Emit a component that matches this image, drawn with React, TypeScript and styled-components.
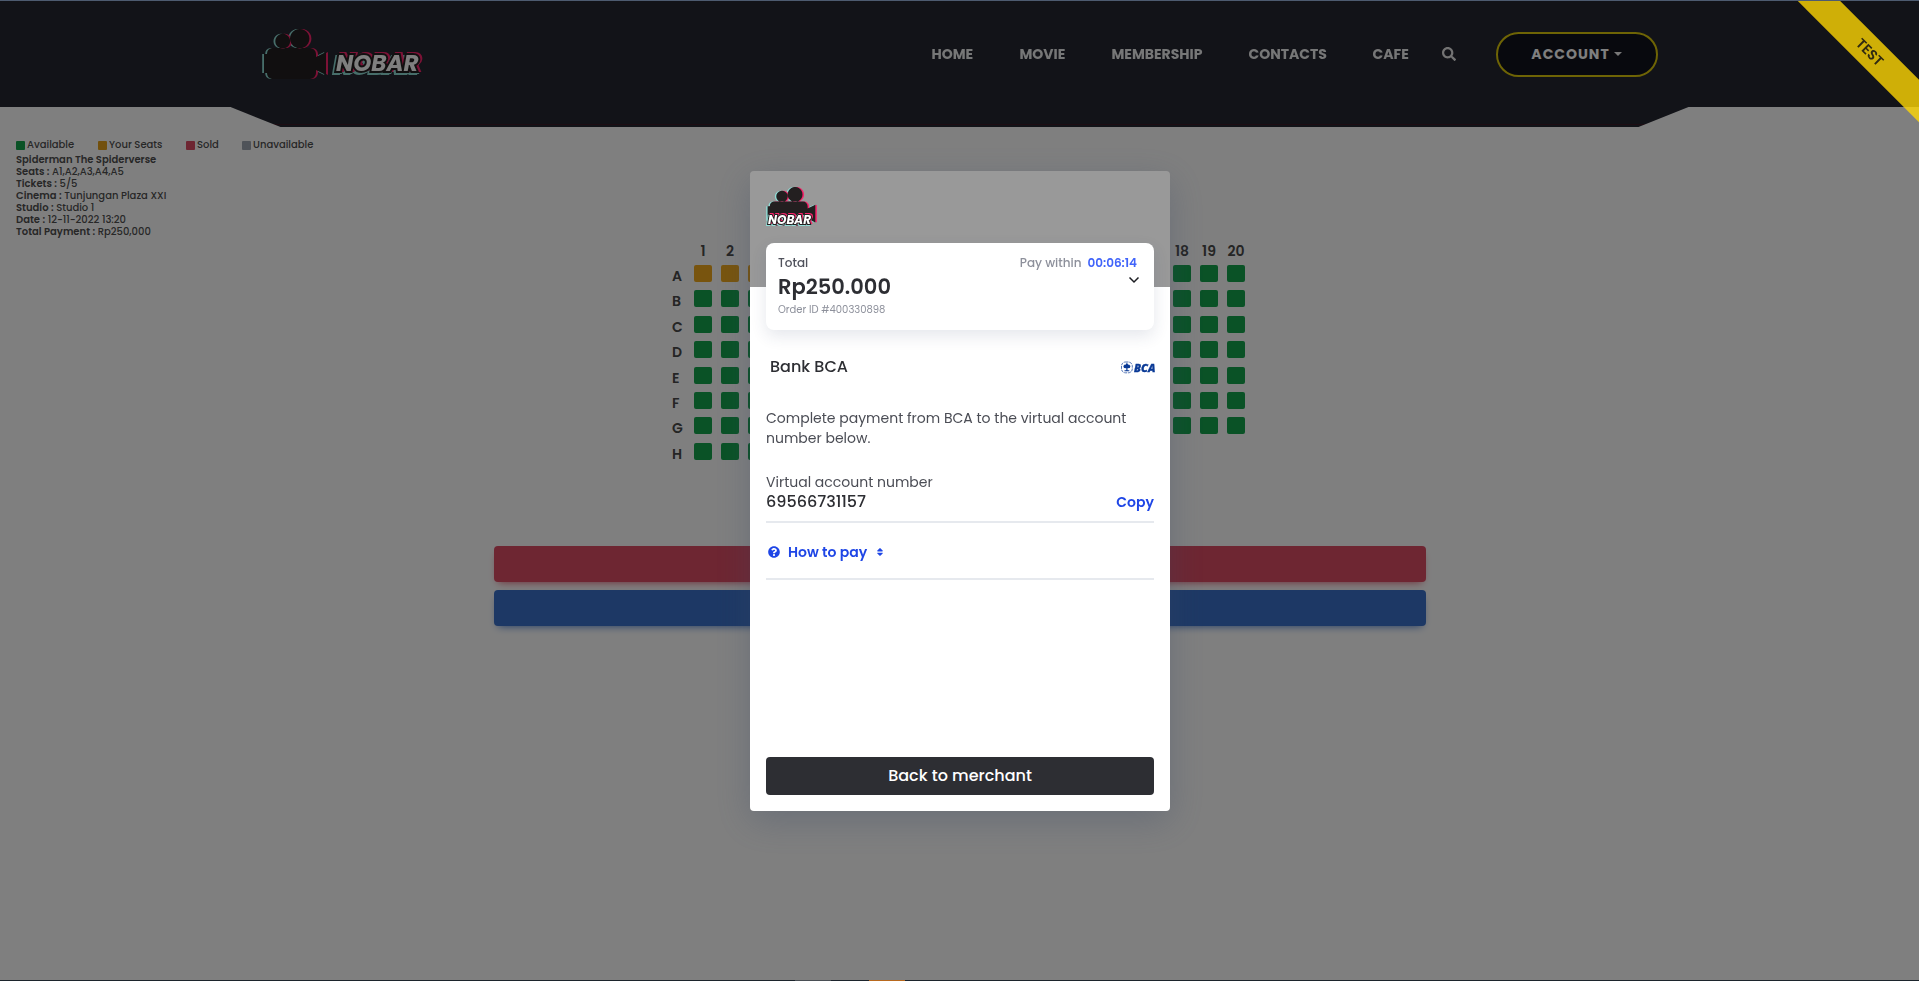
import React from 'react';
import styled, { createGlobalStyle } from 'styled-components';
import { FaSearch, FaQuestionCircle, FaSort } from 'react-icons/fa';

const GlobalStyle = createGlobalStyle`
  *, *::before, *::after { box-sizing: border-box; }
  body {
    margin: 0;
    background: #fff;
    color: #4f4f4f;
    font-family: Poppins, Inter, "Open Sans", sans-serif;
    font-size: 14px;
  }
  button { font-family: inherit; cursor: pointer; }
  p, h1, h2 { margin: 0; }
`;

/* ---------- page behind the dialog ---------- */

const Page = styled.div`
  min-height: 100vh;
  overflow: hidden;
`;

const HeaderBar = styled.header`
  height: 107px;
  padding: 0 24px;
  background: #242630;
`;

const HeaderInner = styled.div`
  display: flex;
  align-items: center;
  max-width: 1396px;
  height: 108px;
  margin: 0 auto;
`;

const HeaderTray = styled.div`
  max-width: 1458px;
  height: 20px;
  margin: 0 auto;
  background: linear-gradient(#242630 17px, #3c1a26 17px, #3c1a26 18px, #242630 18px);
  clip-path: polygon(0 0, 100% 0, calc(100% - 50px) 100%, 50px 100%);
`;

const LogoLink = styled.a`
  display: flex;
  margin-right: auto;
`;

const Nav = styled.nav`
  display: flex;
  align-items: center;
  height: 44px;
`;

const NavLink = styled.a<{ $width: number }>`
  width: ${(p) => p.$width}px;
  color: #fff;
  opacity: 0.92;
  font-size: 14px;
  line-height: 20px;
  font-weight: 700;
  text-decoration: none;
  white-space: nowrap;
`;

const IconButton = styled.button`
  display: flex;
  margin: 0 40px 0 0;
  padding: 0;
  border: 0;
  background: none;
  color: #e6e6e6;
`;

const AccountButton = styled.button`
  display: flex;
  align-items: center;
  justify-content: center;
  gap: 4px;
  width: 162px;
  height: 45px;
  border: 2px solid #dcc80a;
  border-radius: 23px;
  background: #10121c;
  color: #fff;
  font-size: 14px;
  font-weight: 700;
  letter-spacing: 1px;
`;

const Caret = styled.span`
  border: 4px solid transparent;
  border-top-color: #f0f0f0;
  border-bottom: 0;
`;

const Booking = styled.section`
  display: grid;
  justify-items: start;
  padding: 12px 16px 0;
  font-size: 10px;
  line-height: 12px;
`;

const Legend = styled.ul`
  display: grid;
  grid-template-columns: 82px 88px 56px auto;
  justify-content: start;
  margin: 0 0 3px;
  padding: 0;
  list-style: none;
  font-weight: 500;
`;

const LegendItem = styled.li<{ $color: string }>`
  display: flex;
  align-items: center;
  gap: 2px;
  white-space: nowrap;

  &::before {
    content: '';
    width: 9px;
    height: 9px;
    border-radius: 1px;
    background: ${(p) => p.$color};
  }
`;

const Detail = styled.p`
  font-weight: 500;
  b { font-weight: 600; }
`;

const SeatMap = styled.section`
  display: grid;
  justify-content: center;
  margin-top: 2px;
  padding-right: 2px;
`;

const SeatRow = styled.div`
  display: grid;
  grid-template-columns: 13px repeat(10, 18px) 11px repeat(10, 18px);
  column-gap: 9px;
  align-items: start;
`;

const SeatRows = styled.div`
  display: grid;
  grid-template-rows: repeat(8, 1fr);
  height: 203px;
`;

const SeatLabel = styled.span<{ $center?: boolean }>`
  display: flex;
  justify-content: ${(p) => (p.$center ? 'center' : 'flex-start')};
  font-size: 14px;
  line-height: 22px;
  font-weight: 600;
  color: #4a4a4a;
`;

const NumberRow = styled(SeatRow)`
  height: 25px;
`;

const Seat = styled.input<{ $mine: boolean }>`
  appearance: none;
  width: 18px;
  height: 17px;
  margin: 0;
  border-radius: 2px;
  background: ${(p) => (p.$mine ? '#f0a91d' : '#14a44d')};
`;

const Actions = styled.div`
  display: grid;
  gap: 8px;
  max-width: 932px;
  margin: 78px auto 0;
`;

const ActionButton = styled.button<{ $color: string }>`
  height: 36px;
  border: 0;
  border-radius: 4px;
  background: ${(p) => p.$color};
  box-shadow: 0 4px 9px -4px ${(p) => p.$color};
`;

/* ---------- payment dialog ---------- */

const Overlay = styled.div`
  position: fixed;
  inset: 0;
  display: flex;
  align-items: center;
  justify-content: center;
  padding: 1px 0 0 1px;
  background: rgba(0, 0, 0, 0.5);
`;

const Dialog = styled.div`
  display: flex;
  flex-direction: column;
  width: 420px;
  min-height: 640px;
  padding: 16px;
  border-radius: 4px;
  background: linear-gradient(#999 116px, #fff 116px);
  box-shadow: 0 10px 35px rgba(60, 74, 104, 0.32);
  color: #2d2e33;
`;

const DialogBrand = styled.div`
  display: flex;
  height: 56px;
`;

const Summary = styled.section`
  display: grid;
  grid-template-columns: 1fr auto;
  height: 87px;
  padding: 10px 12px 0 12px;
  border-radius: 8px;
  background: #fff;
  box-shadow: 0 6px 16px rgba(40, 56, 100, 0.12);
  font-size: 12px;
  line-height: 20px;
  font-weight: 500;
  color: #50525c;
`;

const Timer = styled.p`
  display: flex;
  gap: 6px;
  padding-right: 5px;
  color: #8d909b;
  time { color: #4164fa; font-weight: 600; }
`;

const SummaryMain = styled.div`
  white-space: nowrap;
`;

const SummarySide = styled.div`
  display: flex;
  flex-direction: column;
  align-items: flex-end;
`;

const Amount = styled.h1`
  font-size: 21px;
  line-height: 28px;
  font-weight: 600;
  color: #2d2e33;
`;

const OrderId = styled.p`
  font-size: 10px;
  line-height: 18px;
  font-weight: 400;
  color: #8d909b;
`;

const ExpandButton = styled.button`
  display: flex;
  margin: 3px 2px 0 0;
  padding: 0;
  border: 0;
  background: none;
`;

const Method = styled.div`
  display: flex;
  align-items: center;
  justify-content: space-between;
  height: 74px;
  padding-left: 4px;
`;

const MethodName = styled.h2`
  font-size: 16px;
  line-height: 20px;
  font-weight: 500;
`;

const Instructions = styled.p`
  margin: 4px 0 24px;
  font-size: 14px;
  line-height: 20px;
  color: #4b4d55;
`;

const Account = styled.div`
  display: grid;
  grid-template-columns: 1fr auto;
  padding-bottom: 9px;
  border-bottom: 2px solid #e6e9ee;
  line-height: 20px;
`;

const AccountLabel = styled.span`
  grid-column: 1 / -1;
  color: #4b4d55;
`;

const AccountNumber = styled.output`
  font-size: 16px;
  font-weight: 500;
`;

const LinkButton = styled.button`
  display: flex;
  align-items: center;
  padding: 0;
  border: 0;
  background: none;
  color: #1f46e6;
  font-size: 14px;
  line-height: 20px;
  font-weight: 600;
`;

const HowTo = styled.div`
  display: flex;
  height: 57px;
  padding: 0 0 0 2px;
  border-bottom: 2px solid #e6e9ee;

  ${LinkButton} { height: 58px; gap: 8px; }
`;

const MerchantButton = styled.button`
  height: 38px;
  margin-top: auto;
  padding: 0 0 2px;
  border: 0;
  border-radius: 4px;
  background: #2d2e33;
  color: #fff;
  font-size: 16px;
  font-weight: 500;
`;

/* ---------- window decorations ---------- */

const RibbonCorner = styled.div`
  position: fixed;
  top: 0;
  right: 0;
  width: 140px;
  height: 140px;
  overflow: hidden;
  pointer-events: none;
`;

const Ribbon = styled.div`
  position: absolute;
  top: 37px;
  left: -9px;
  width: 200px;
  height: 30px;
  background: rgba(255, 215, 4, 0.8);
  color: #2f2a12;
  font-size: 14px;
  line-height: 30px;
  font-weight: 600;
  text-align: center;
  transform: rotate(45deg);
`;

const TopEdge = styled.div`
  position: fixed;
  inset: 0 0 auto;
  height: 1px;
  background: #4d5b70;
`;

const BottomEdge = styled.div`
  position: fixed;
  inset: auto 0 0;
  display: flex;
  justify-content: center;
  gap: 38px;
  height: 1px;
  padding-right: 219px;
  background: #1c242c;
`;

const EdgeTab = styled.span<{ $color: string }>`
  width: 36px;
  background: ${(p) => p.$color};
`;

/* ---------- drawings ---------- */

const CAMERA =
  'M22 33H60A6 6 0 0 1 66 39V42L76 37V60L66 55V58A6 6 0 0 1 60 64H22A6 6 0 0 1 17 58H14V39H17A6 6 0 0 1 22 33Z' +
  'M32.7 18.8a7.4 7.4 0 1 0 .01 0ZM49.7 14a9.7 9.7 0 1 0 .01 0Z';

const Camera = () => (
  <g>
    <path d={CAMERA} fill="#8fdcd5" transform="translate(-1.8 0)" />
    <path d={CAMERA} fill="#f8246c" transform="translate(2 0)" />
    <path d={CAMERA} fill="#231f20" />
  </g>
);

const Wordmark = styled.text<{ $size: number; $edge: number }>`
  font-family: Poppins, Lato, sans-serif;
  font-size: ${(p) => p.$size}px;
  font-weight: 700;
  font-style: italic;
  fill: #fff;
  stroke: #231f20;
  stroke-width: ${(p) => p.$edge * 2}px;
  paint-order: stroke;
  filter: drop-shadow(${(p) => p.$edge}px -1px 0 #f8246c)
    drop-shadow(-${(p) => p.$edge}px ${(p) => p.$edge}px 0 #8fdcd5);
`;

const HeaderLogo = () => (
  <svg width="162" height="54" viewBox="12 12 162 54" role="img" aria-label="Nobar">
    <Camera />
    <Wordmark x="86" y="56" $size={23} $edge={2}>NOBAR</Wordmark>
  </svg>
);

const DialogLogo = () => (
  <svg width="52" height="40" viewBox="0 0 52 40" role="img" aria-label="Nobar">
    <g transform="translate(-9.2 -10.8) scale(.77)"><Camera /></g>
    <Wordmark x="2" y="37" $size={12} $edge={1}>NOBAR</Wordmark>
  </svg>
);

const BcaSvg = styled.svg`
  margin-right: -2px;
`;

const BcaLogo = () => (
  <BcaSvg width="36" height="13" viewBox="0 0 36 13" role="img" aria-label="BCA">
    <rect x="1.500" y="1" width="10.800" height="10.800" rx="4" fill="#fff" stroke="#0a3a96" strokeWidth=".7" strokeDasharray="3 .8" />
    <path d="M6.900 1.800 8.200 3.800 9 3.500 10.500 4.900 9.800 7 7.500 7.300V9.200H9.300V10.200H4.500V9.200H6.300V7.300L4 7 3.300 4.900 4.800 3.500 5.600 3.800Z" fill="#0a3a96" />
    <text x="14" y="10.500" fill="#0a3a96" stroke="#0a3a96" strokeWidth=".3" fontFamily="Open Sans, sans-serif" fontWeight="800" fontStyle="italic" fontSize="11">BCA</text>
  </BcaSvg>
);

/* ---------- data ---------- */

const NAV = [
  { label: 'HOME', width: 88 },
  { label: 'MOVIE', width: 92 },
  { label: 'MEMBERSHIP', width: 137 },
  { label: 'CONTACTS', width: 124 },
  { label: 'CAFE', width: 69 },
];

const LEGEND = [
  { label: 'Available', color: '#14a44d' },
  { label: 'Your Seats', color: '#e4a11b' },
  { label: 'Sold', color: '#dc4c64' },
  { label: 'Unavailable', color: '#9fa6b2' },
];

const DETAILS = [
  ['Seats', 'A1,A2,A3,A4,A5'],
  ['Tickets', '5/5'],
  ['Cinema', 'Tunjungan Plaza XXI'],
  ['Studio', 'Studio 1'],
  ['Date', '12-11-2022 13:20'],
  ['Total Payment', 'Rp250,000'],
];

const ROWS = ['A', 'B', 'C', 'D', 'E', 'F', 'G', 'H'];
const LEFT = Array.from({ length: 10 }, (_, i) => i + 1);
const RIGHT = LEFT.map((n) => n + 10);

const Seats = ({ row, numbers }: { row: string; numbers: number[] }) => (
  <>
    {numbers.map((n) => (
      <Seat key={n} type="checkbox" aria-label={`Seat ${row}${n}`} $mine={row === 'A' && n <= 5} />
    ))}
  </>
);

export default function App() {
  return (
    <>
      <GlobalStyle />
      <Page>
        <HeaderBar>
          <HeaderInner>
            <LogoLink href="#home"><HeaderLogo /></LogoLink>
            <Nav>
              {NAV.map((item) => (
                <NavLink key={item.label} href={`#${item.label.toLowerCase()}`} $width={item.width}>
                  {item.label}
                </NavLink>
              ))}
              <IconButton aria-label="Search"><FaSearch size={14} /></IconButton>
              <AccountButton>ACCOUNT<Caret /></AccountButton>
            </Nav>
          </HeaderInner>
        </HeaderBar>
        <HeaderTray />

        <main>
          <Booking>
            <Legend>
              {LEGEND.map((item) => (
                <LegendItem key={item.label} $color={item.color}>{item.label}</LegendItem>
              ))}
            </Legend>
            <Detail><b>Spiderman The Spiderverse</b></Detail>
            {DETAILS.map(([name, value]) => (
              <Detail key={name}><b>{name} :</b> {value}</Detail>
            ))}
          </Booking>

          <SeatMap>
            <NumberRow>
              <span />
              {LEFT.map((n) => <SeatLabel key={n} $center>{n}</SeatLabel>)}
              <span />
              {RIGHT.map((n) => <SeatLabel key={n} $center>{n}</SeatLabel>)}
            </NumberRow>
            <SeatRows>
              {ROWS.map((row) => (
                <SeatRow key={row}>
                  <SeatLabel>{row}</SeatLabel>
                  <Seats row={row} numbers={LEFT} />
                  <span />
                  {row !== 'H' && <Seats row={row} numbers={RIGHT} />}
                </SeatRow>
              ))}
            </SeatRows>
          </SeatMap>

          <Actions>
            <ActionButton $color="#dc4c64" aria-label="Cancel" />
            <ActionButton $color="#3b71ca" aria-label="Pay" />
          </Actions>
        </main>
      </Page>

      <Overlay>
        <Dialog role="dialog" aria-label="Payment">
          <DialogBrand><DialogLogo /></DialogBrand>
          <Summary>
            <SummaryMain>
              <p>Total</p>
              <Amount>Rp250.000</Amount>
              <OrderId>Order ID #400330898</OrderId>
            </SummaryMain>
            <SummarySide>
              <Timer>Pay within <time>00:06:14</time></Timer>
              <ExpandButton aria-label="Show order details">
                <svg width="12" height="8" viewBox="0 0 12 8" fill="none" stroke="#1c1d22" strokeWidth="1.5">
                  <path d="M1.500 1.500 6 6 10.500 1.500" />
                </svg>
              </ExpandButton>
            </SummarySide>
          </Summary>

          <Method>
            <MethodName>Bank BCA</MethodName>
            <BcaLogo />
          </Method>
          <Instructions>
            Complete payment from BCA to the virtual account number below.
          </Instructions>
          <Account>
            <AccountLabel id="va-label">Virtual account number</AccountLabel>
            <AccountNumber aria-labelledby="va-label">69566731157</AccountNumber>
            <LinkButton>Copy</LinkButton>
          </Account>
          <HowTo>
            <LinkButton>
              <FaQuestionCircle size={12} />
              How to pay
              <FaSort size={10} />
            </LinkButton>
          </HowTo>
          <MerchantButton>Back to merchant</MerchantButton>
        </Dialog>
      </Overlay>

      <RibbonCorner><Ribbon>TEST</Ribbon></RibbonCorner>
      <TopEdge />
      <BottomEdge>
        <EdgeTab $color="#4a4f55" />
        <EdgeTab $color="#b8691e" />
      </BottomEdge>
    </>
  );
}
